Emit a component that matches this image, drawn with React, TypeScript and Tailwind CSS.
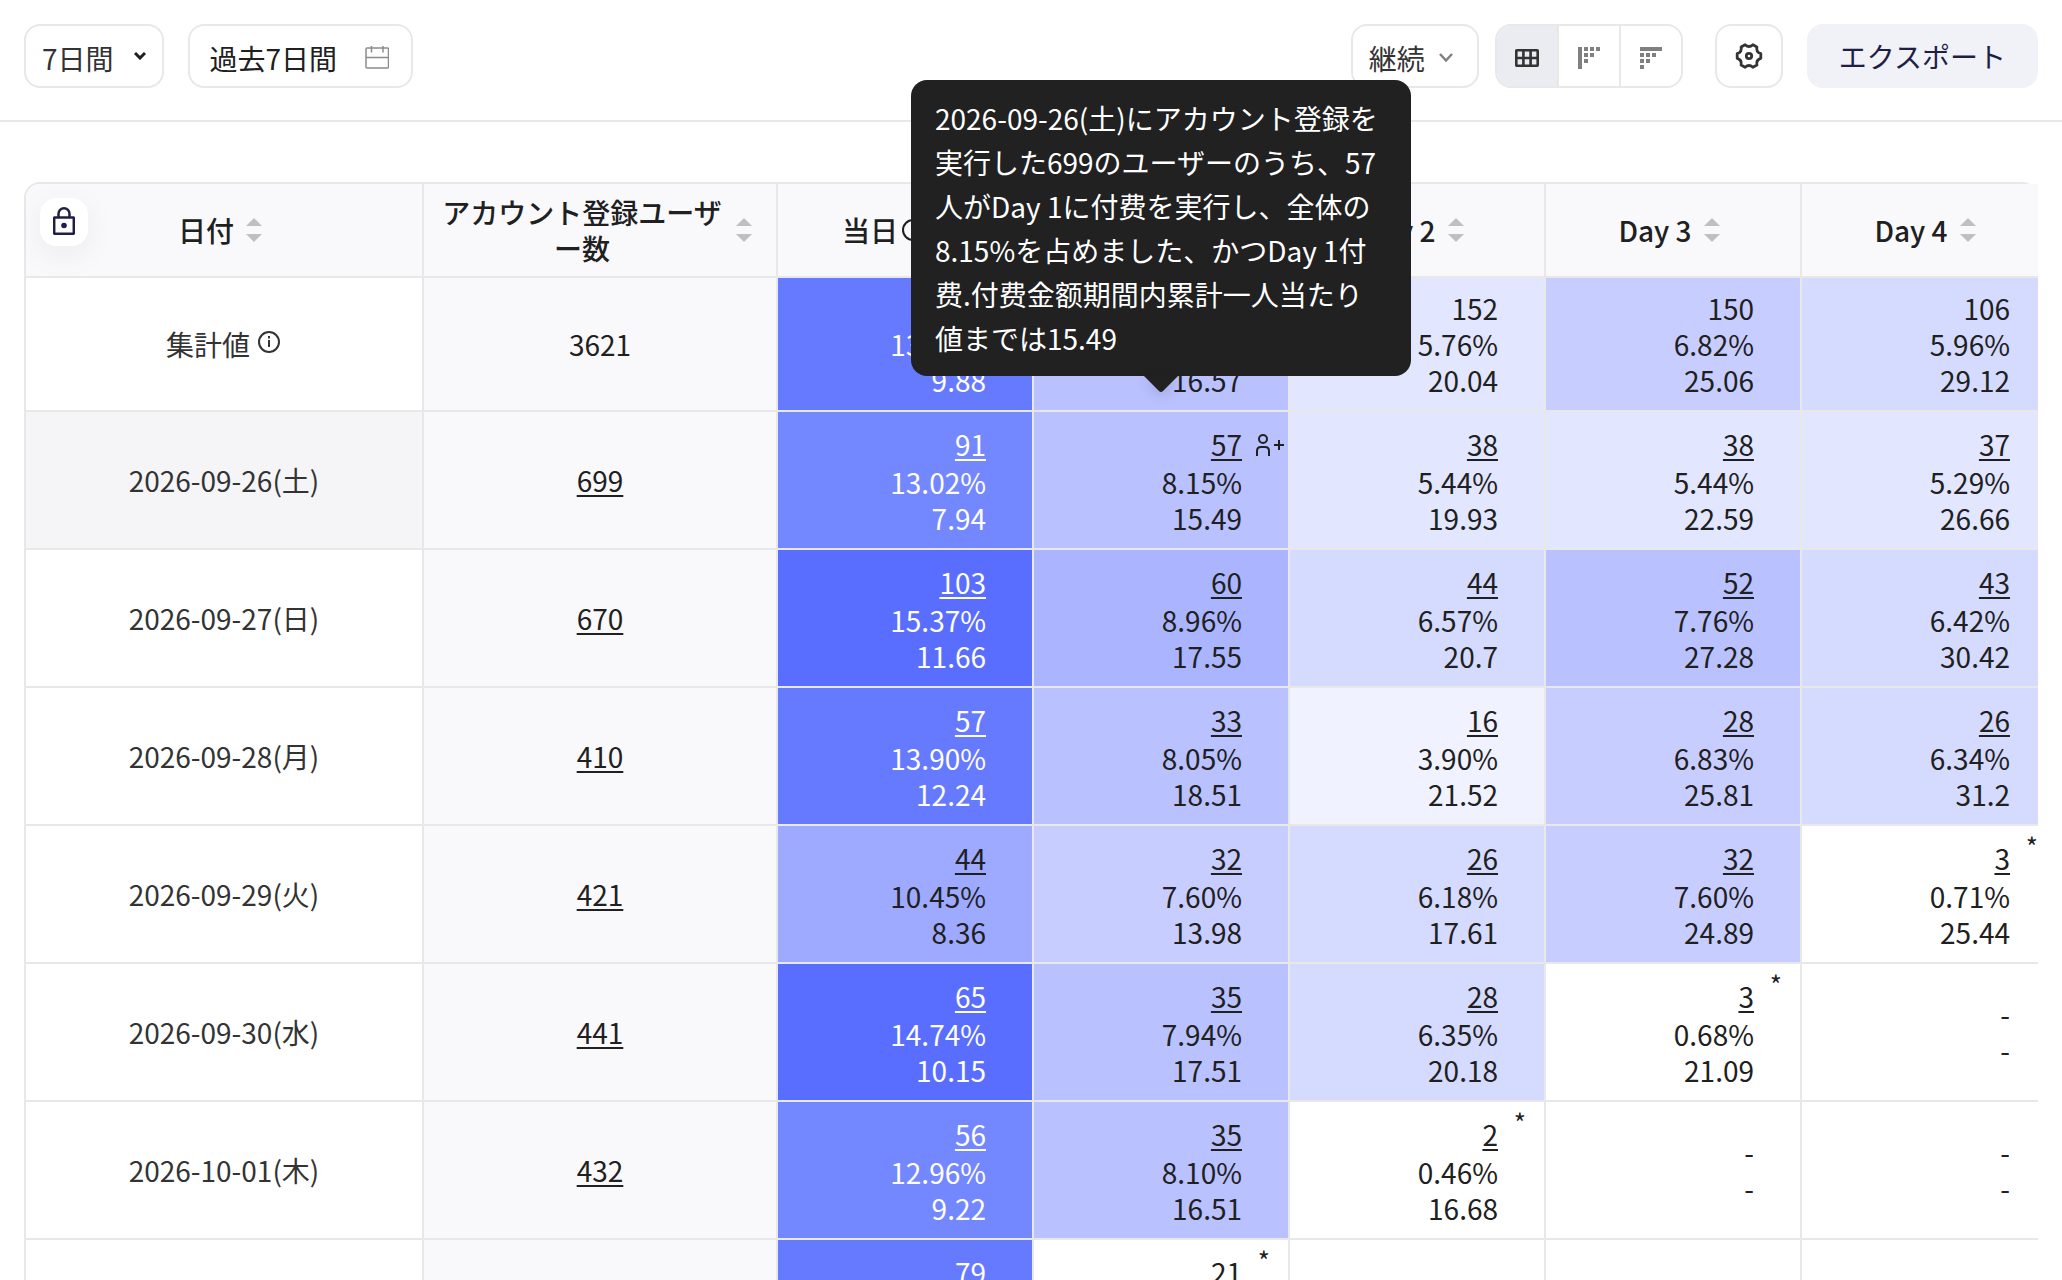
import type { ReactNode } from "react";

type Cell = {
  values: string[];
  bg?: string;
  light?: boolean;
  star?: boolean;
  active?: boolean;
};

type Row = { date: string; users: string; cells: Cell[] };

const L1 = "bg-[#f0f2ff]";
const L2 = "bg-[#e2e6ff]";
const L3 = "bg-[#d5daff]";
const L4 = "bg-[#c8cdff]";
const L5 = "bg-[#b9c1ff]";
const L6 = "bg-[#abb5ff]";
const L7 = "bg-[#9eaaff]";
const L8 = "bg-[#7387ff]";
const L9 = "bg-[#667aff]";
const L10 = "bg-[#596eff]";

const empty: Cell = { values: ["-", "-"] };

const total: Cell[] = [
  { values: ["495", "13.67%", "9.88"], bg: L9, light: true },
  { values: ["295", "8.15%", "16.57"], bg: L5 },
  { values: ["152", "5.76%", "20.04"], bg: L2 },
  { values: ["150", "6.82%", "25.06"], bg: L4 },
  { values: ["106", "5.96%", "29.12"], bg: L3 },
];

const rows: Row[] = [
  {
    date: "2026-09-26(土)",
    users: "699",
    cells: [
      { values: ["91", "13.02%", "7.94"], bg: L8, light: true },
      { values: ["57", "8.15%", "15.49"], bg: L5, active: true },
      { values: ["38", "5.44%", "19.93"], bg: L2 },
      { values: ["38", "5.44%", "22.59"], bg: L2 },
      { values: ["37", "5.29%", "26.66"], bg: L2 },
    ],
  },
  {
    date: "2026-09-27(日)",
    users: "670",
    cells: [
      { values: ["103", "15.37%", "11.66"], bg: L10, light: true },
      { values: ["60", "8.96%", "17.55"], bg: L6 },
      { values: ["44", "6.57%", "20.7"], bg: L3 },
      { values: ["52", "7.76%", "27.28"], bg: L5 },
      { values: ["43", "6.42%", "30.42"], bg: L3 },
    ],
  },
  {
    date: "2026-09-28(月)",
    users: "410",
    cells: [
      { values: ["57", "13.90%", "12.24"], bg: L9, light: true },
      { values: ["33", "8.05%", "18.51"], bg: L5 },
      { values: ["16", "3.90%", "21.52"], bg: L1 },
      { values: ["28", "6.83%", "25.81"], bg: L4 },
      { values: ["26", "6.34%", "31.2"], bg: L3 },
    ],
  },
  {
    date: "2026-09-29(火)",
    users: "421",
    cells: [
      { values: ["44", "10.45%", "8.36"], bg: L7 },
      { values: ["32", "7.60%", "13.98"], bg: L4 },
      { values: ["26", "6.18%", "17.61"], bg: L3 },
      { values: ["32", "7.60%", "24.89"], bg: L4 },
      { values: ["3", "0.71%", "25.44"], star: true },
    ],
  },
  {
    date: "2026-09-30(水)",
    users: "441",
    cells: [
      { values: ["65", "14.74%", "10.15"], bg: L10, light: true },
      { values: ["35", "7.94%", "17.51"], bg: L5 },
      { values: ["28", "6.35%", "20.18"], bg: L3 },
      { values: ["3", "0.68%", "21.09"], star: true },
      empty,
    ],
  },
  {
    date: "2026-10-01(木)",
    users: "432",
    cells: [
      { values: ["56", "12.96%", "9.22"], bg: L8, light: true },
      { values: ["35", "8.10%", "16.51"], bg: L5 },
      { values: ["2", "0.46%", "16.68"], star: true },
      empty,
      empty,
    ],
  },
  {
    date: "2026-10-02(金)",
    users: "548",
    cells: [
      { values: ["79", "14.42%", "9.61"], bg: L9, light: true },
      { values: ["21", "3.83%", "14.02"], star: true },
      empty,
      empty,
      empty,
    ],
  },
];

function SortIcon() {
  return (
    <svg width="16" height="24" viewBox="0 0 16 24" fill="#bfbfbf" className="shrink-0">
      <path d="M8 0l8 8H0zM8 24l8-8H0z" />
    </svg>
  );
}

function InfoIcon({ className = "" }: { className?: string }) {
  return (
    <svg
      width="22"
      height="22"
      viewBox="0 0 22 22"
      fill="none"
      stroke="currentColor"
      strokeWidth="2"
      className={`shrink-0 ${className}`}
    >
      <circle cx="11" cy="11" r="10" />
      <path d="M11 9v7M11 5v2.5" />
    </svg>
  );
}

function Tooltip() {
  return (
    <div
      role="tooltip"
      className="absolute bottom-full left-1/2 z-20 mb-9 w-[500px] -translate-x-1/2 rounded-2xl bg-[#212121] px-6 py-4 text-left text-[28px] leading-[44px] text-white"
    >
      2026-09-26(土)にアカウント登録を実行した699のユーザーのうち、57人がDay 1に付费を実行し、全体の8.15%を占めました、かつDay 1付费.付费金额期間内累計一人当たり値までは15.49
      <svg
        width="36"
        height="16"
        viewBox="0 0 36 16"
        fill="#212121"
        className="absolute top-full left-1/2 -translate-x-1/2 drop-shadow-[0_4px_6px_rgba(0,0,0,0.12)]"
      >
        <path d="M1 0h34L20 15q-2 2-4 0z" />
      </svg>
    </div>
  );
}

function HeadCell({ children, className = "" }: { children: ReactNode; className?: string }) {
  return (
    <th className={`relative h-[94px] border-r-2 border-b-2 border-[#e8e8e8] bg-[#f9f9fc] pr-6 pl-4 font-medium ${className}`}>
      <div className="flex items-center justify-center gap-3">
        {children}
        <SortIcon />
      </div>
    </th>
  );
}

function DataCell({ cell, linked = true }: { cell: Cell; linked?: boolean }) {
  const [first, ...rest] = cell.values;
  const isLink = linked && first !== "-";
  return (
    <td
      className={`relative border-r-2 border-b-2 border-[#e8e8e8] py-3 pr-[46px] text-right ${cell.bg ?? "bg-white"} ${cell.light ? "text-white" : ""}`}
    >
      {isLink ? (
        <a href="#" className="block py-[2px] underline decoration-2 underline-offset-[3px]">
          {first}
        </a>
      ) : (
        <p>{first}</p>
      )}
      {rest.map((v, i) => (
        <p key={i}>{v}</p>
      ))}
      {cell.star && <span className="absolute top-[2px] right-[18px] text-[26px]">*</span>}
      {cell.active && (
        <>
          <svg
            width="28"
            height="22"
            viewBox="0 0 28 22"
            fill="none"
            stroke="#202020"
            strokeWidth="2"
            className="absolute top-[22px] right-1"
          >
            <circle cx="7" cy="5" r="4" />
            <path d="M1 22v-5q0-4 4-4h4q4 0 4 4v5M18 11h10M23 6v10" />
          </svg>
          <Tooltip />
        </>
      )}
    </td>
  );
}

export default function App() {
  return (
    <div
      lang="ja"
      className="h-screen overflow-hidden bg-white font-['Noto_Sans_CJK_JP',sans-serif] text-[28px] leading-[36px] text-[#202020]"
    >
      {/* Toolbar */}
      <header className="flex items-center justify-between border-b-2 border-[#e8e8e8] px-6 pt-6 pb-8">
        <div className="flex gap-6">
          <button className="flex h-16 items-center gap-5 rounded-2xl border-2 border-[#e8e8e8] px-4 pt-1 text-[#333]">
            7日間
            <svg width="12" height="8" viewBox="0 0 12 8" fill="none" stroke="#202020" strokeWidth="3" className="mb-1">
              <path d="M1 1l5 5 5-5" />
            </svg>
          </button>
          <button className="flex h-16 items-center gap-7 rounded-2xl border-2 border-[#e8e8e8] pt-1 pr-[22px] pl-5">
            過去7日間
            <svg width="24" height="23" viewBox="0 0 24 23" fill="none" stroke="#8c8c8c" strokeWidth="1.5" className="mb-[2px]">
              <rect x="1" y="2" width="22.5" height="20" rx="1" />
              <path d="M1 11.5h22.5M6.5 0v6.5M18 0v6.5" />
            </svg>
          </button>
        </div>

        <div className="flex items-center">
          <button className="mr-4 flex h-16 items-center gap-[14px] rounded-2xl border-2 border-[#e8e8e8] pr-6 pl-4 text-[#333]">
            <span className="pt-1">継続</span>
            <svg width="14" height="10" viewBox="0 0 14 10" fill="none" stroke="#808080" strokeWidth="2.5" className="mt-1">
              <path d="M1 1l6 6.5 6-6.5" />
            </svg>
          </button>
          <div className="mr-8 flex h-16 overflow-hidden rounded-2xl border-2 border-[#e8e8e8]">
            <button aria-label="table" className="flex w-[62px] items-center justify-center border-r-2 border-[#e8e8e8] bg-[#ebecf2] pt-1">
              <svg width="24" height="18" viewBox="0 0 24 18" fill="none" stroke="#333" strokeWidth="2.6">
                <rect x="1.3" y="1.3" width="21.4" height="15.4" rx="0.5" />
                <path d="M1 9h22M8.4 1v16M15.6 1v16" />
              </svg>
            </button>
            <button aria-label="left" className="flex w-[62px] items-center justify-center border-r-2 border-[#e8e8e8] pt-1">
              <svg width="22" height="22" viewBox="0 0 22 22" fill="#808080">
                <path d="M0 0h4v22H0zM6 0h4v4H6zM12 0h4v4h-4zM18 0h4v4h-4zM6 6h4v4H6zM12 6h4v4h-4zM6 12h4v4H6z" />
              </svg>
            </button>
            <button aria-label="top" className="flex w-[60px] items-center justify-center pt-1">
              <svg width="22" height="22" viewBox="0 0 22 22" fill="#808080">
                <path d="M0 0h22v4H0zM0 6h4v4H0zM6 6h4v4H6zM12 6h4v4h-4zM0 12h4v4H0zM6 12h4v4H6zM0 18h4v4H0z" />
              </svg>
            </button>
          </div>
          <button aria-label="settings" className="mr-6 flex h-16 w-[68px] items-center justify-center rounded-2xl border-2 border-[#e8e8e8]">
            <svg width="28" height="28" viewBox="0 0 28 28" fill="none" stroke="#333" strokeWidth="2.8" strokeLinejoin="round">
              <path d="M25.8 16.3Q20.8 17.9 21.9 23.1L17.9 25.3Q14 21.8 10.1 25.3L6.1 23.1Q7.2 17.9 2.2 16.3V11.7Q7.2 10.1 6.1 4.9L10.1 2.7Q14 6.2 17.9 2.7L21.9 4.9Q20.8 10.1 25.8 11.7Z" />
              <circle cx="14" cy="14" r="2.7" />
            </svg>
          </button>
          <button className="h-16 rounded-2xl bg-[#f1f2f8] px-8 text-[#1f1f45]">エクスポート</button>
        </div>
      </header>

      {/* Cohort table */}
      <main className="px-6 pt-[60px]">
        <div className="rounded-t-2xl border-t-2 border-l-2 border-[#e8e8e8] [clip-path:inset(-200px_0_0_0_round_16px)]">
          <table className="w-[2032px] table-fixed border-separate border-spacing-0">
            <colgroup>
              <col className="w-[398px]" />
              <col className="w-[354px]" />
              <col className="w-64" />
              <col className="w-64" />
              <col className="w-64" />
              <col className="w-64" />
              <col className="w-64" />
            </colgroup>
            <thead>
              <tr>
                <HeadCell className="rounded-tl-2xl">
                  <button
                    aria-label="lock"
                    className="absolute top-[14px] left-[14px] flex size-12 items-center justify-center rounded-2xl bg-white pb-[2px] shadow-[0_8px_32px_rgba(0,0,0,0.06)]"
                  >
                    <svg width="22" height="28" viewBox="0 0 22 28" fill="none" stroke="#1f1f45" strokeWidth="2.5">
                      <rect x="1.2" y="10.5" width="19.6" height="16.3" rx="0.5" />
                      <path d="M5.5 10V6.8a5.5 5.5 0 0 1 11 0V10" />
                      <circle cx="11" cy="18.5" r="2.8" fill="#1f1f45" stroke="none" />
                    </svg>
                  </button>
                  日付
                </HeadCell>
                <HeadCell>アカウント登録ユーザー数</HeadCell>
                <HeadCell>
                  <span className="flex items-center gap-1">
                    当日
                    <InfoIcon className="mr-2" />
                  </span>
                </HeadCell>
                <HeadCell>Day 1</HeadCell>
                <HeadCell>Day 2</HeadCell>
                <HeadCell>Day 3</HeadCell>
                <HeadCell>Day 4</HeadCell>
              </tr>
            </thead>
            <tbody>
              <tr>
                <td className="border-r-2 border-b-2 border-[#e8e8e8]">
                  <div className="flex items-center justify-center gap-2 text-[#333]">
                    集計値
                    <InfoIcon className="mr-[2px] mb-1" />
                  </div>
                </td>
                <td className="border-r-2 border-b-2 border-[#e8e8e8] bg-[#f9f9fc] text-center">3621</td>
                {total.map((cell, i) => (
                  <DataCell key={i} cell={cell} linked={false} />
                ))}
              </tr>
              {rows.map((row, i) => (
                <tr key={row.date}>
                  <td className={`h-[138px] border-r-2 border-b-2 border-[#e8e8e8] text-center text-[#333] ${i === 0 ? "bg-[#f5f5f7]" : ""}`}>
                    {row.date}
                  </td>
                  <td className="border-r-2 border-b-2 border-[#e8e8e8] bg-[#f9f9fc] text-center">
                    <a href="#" className="underline decoration-2 underline-offset-[3px]">
                      {row.users}
                    </a>
                  </td>
                  {row.cells.map((cell, j) => (
                    <DataCell key={j} cell={cell} />
                  ))}
                </tr>
              ))}
            </tbody>
          </table>
        </div>
      </main>
    </div>
  );
}
